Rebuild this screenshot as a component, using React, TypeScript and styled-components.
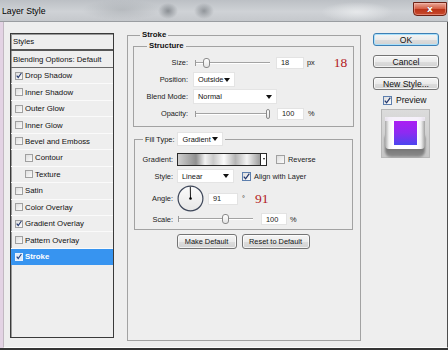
import React from 'react';
import styled, { createGlobalStyle, css } from 'styled-components';

const GlobalStyle = createGlobalStyle`
  html, body { margin: 0; padding: 0; }
  body { background: #2e2e2e; font-family: "Liberation Sans", Arial, sans-serif; color: #111; }
  * { box-sizing: border-box; }
`;

const Window = styled.div`
  width: 448px;
  height: 350px;
  display: flex;
  flex-direction: column;
  background: #e3d3e4;
  overflow: hidden;
`;

const TitleBar = styled.div`
  height: 22px;
  flex: none;
  display: flex;
  align-items: flex-start;
  justify-content: space-between;
  padding-left: 2px;
  border-bottom: 1px solid #9a9da1;
  background:
    radial-gradient(ellipse 10px 8px at 168px 11px, rgba(70, 76, 82, 0.5), rgba(70, 76, 82, 0)),
    radial-gradient(ellipse 10px 8px at 204px 11px, rgba(70, 76, 82, 0.45), rgba(70, 76, 82, 0)),
    radial-gradient(ellipse 36px 10px at 357px 12px, rgba(236, 238, 240, 0.8), rgba(236, 238, 240, 0)),
    radial-gradient(ellipse 40px 10px at 122px 10px, rgba(140, 145, 150, 0.35), rgba(140, 145, 150, 0)),
    linear-gradient(#bcc0c5, #cfd2d6 55%, #c5c8cc);
`;

const Title = styled.span`
  font-size: 8.7px;
  line-height: 11px;
  padding-top: 6px;
  color: #000;
`;

const CloseButton = styled.div`
  width: 34px;
  height: 14px;
  margin-top: 2px;
  margin-right: 1px;
  border: 1px solid #6e2417;
  border-radius: 0 0 4px 4px;
  background: linear-gradient(#e9a999, #d45a40 50%, #bb3419 51%, #c8492c);
  box-shadow: inset 0 0 0 1px rgba(255, 200, 190, 0.45);
  display: flex;
  align-items: center;
  justify-content: center;
  color: #fff;
  font-family: "DejaVu Sans", sans-serif;
  font-weight: bold;
  font-size: 9px;
  line-height: 1;
  text-shadow: 0 0 1px #5a1a10;
`;

const Body = styled.div`
  flex: 1;
  display: flex;
  align-items: flex-start;
  margin-left: 3px;
  padding: 8px 0 0 6px;
  background: #eeeeee;
  border-left: 1px solid #c2b8c2;
  border-right: 1px solid #4d4d4d;
  border-bottom: 1px solid #fdfdfd;
`;

const BottomEdge = styled.div`
  height: 2px;
  flex: none;
  background: #353535;
`;

/* ---------- styles list ---------- */

const StylesList = styled.div`
  width: 104px;
  height: 305px;
  margin-top: 3px;
  flex: none;
  display: flex;
  flex-direction: column;
  background: #eeeeee;
  border: 1px solid #3a3a3a;
  box-shadow: inset 1px 1px 0 #9a9a9a;
  font-size: 7.8px;
`;

const ListHeader = styled.div<{ $thick?: boolean }>`
  height: 17px;
  flex: none;
  display: flex;
  align-items: center;
  padding-left: 2px;
  border-bottom: ${(p) => (p.$thick ? '2px solid #555' : '1px solid #6a6a6a')};
`;

const ListItem = styled.div<{ $indent?: boolean; $selected?: boolean }>`
  height: 16.45px;
  flex: none;
  display: flex;
  align-items: center;
  gap: 2px;
  padding-left: ${(p) => (p.$indent ? 14 : 4)}px;
  border-bottom: 1px solid #fafafa;
  ${(p) =>
    p.$selected &&
    css`
      background: #3794f0;
      color: #fff;
      font-weight: bold;
      border-bottom-color: #3794f0;
    `}
`;

/* ---------- checkbox ---------- */

const CheckBox = styled.span<{ $size?: number; $accent?: boolean; $light?: boolean }>`
  width: ${(p) => p.$size ?? 8}px;
  height: ${(p) => p.$size ?? 8}px;
  flex: none;
  display: inline-flex;
  align-items: center;
  justify-content: center;
  border: 1px solid ${(p) => (p.$light ? '#e8f2ff' : p.$accent ? '#5d7fae' : '#a0a0a0')};
  background: ${(p) => (p.$light ? '#dfe9f7' : 'linear-gradient(135deg, #dedede, #fbfbfb)')};
`;

const Tick = ({ color = '#23386e' }: { color?: string }) => (
  <svg width="7" height="7" viewBox="0 0 7 7">
    <path d="M0.8 3.6 L2.6 5.8 L6.3 0.6" fill="none" stroke={color} strokeWidth="1.3" />
  </svg>
);

const Check = ({ checked, size, accent, light }: { checked?: boolean; size?: number; accent?: boolean; light?: boolean }) => (
  <CheckBox $size={size} $accent={accent} $light={light}>
    {checked && <Tick color={light ? '#1d3f86' : '#23386e'} />}
  </CheckBox>
);

/* ---------- fieldsets ---------- */

const StrokeGroup = styled.fieldset`
  width: 234px;
  height: 311px;
  margin: 0 0 0 13px;
  padding: 1px 6px 0 5px;
  flex: none;
  border: 1px solid #a2a2a2;
  min-width: 0;
`;

const Legend = styled.legend<{ $left: number }>`
  margin-left: ${(p) => p.$left}px;
  padding: 0 2px;
  font-size: 7.8px;
  line-height: 10px;
  font-weight: bold;
  color: #111;
`;

const FillLegend = styled.legend`
  margin-left: 8px;
  padding: 0 2px;
  display: flex;
  align-items: center;
  gap: 3px;
  font-size: 7.4px;
  height: 14px;
`;

const SubGroup = styled.fieldset<{ $pt: number; $pb: number; $mx?: number; $mt?: number }>`
  margin: ${(p) => p.$mt ?? 0}px ${(p) => p.$mx ?? 0}px 0;
  padding: ${(p) => p.$pt}px 0 ${(p) => p.$pb}px 0;
  border: 1px solid #a2a2a2;
  min-width: 0;
  display: flex;
  flex-direction: column;
`;

const Row = styled.div<{ $h: number; $mt?: number }>`
  height: ${(p) => p.$h}px;
  margin-top: ${(p) => p.$mt ?? 0}px;
  display: flex;
  align-items: center;
  font-size: 7.4px;
  color: #1a1a1a;
`;

const Label = styled.span<{ $w: number; $gap: number }>`
  width: ${(p) => p.$w}px;
  margin-right: ${(p) => p.$gap}px;
  text-align: right;
  flex: none;
`;

const Slider = styled.div<{ $w: number; $ml?: number; $mr?: number }>`
  width: ${(p) => p.$w}px;
  margin-left: ${(p) => p.$ml ?? 0}px;
  margin-right: ${(p) => p.$mr ?? 0}px;
  height: 12px;
  flex: none;
  display: flex;
  align-items: center;
  background:
    linear-gradient(#9a9a9a, #9a9a9a) no-repeat 0 3px / 1px 6px,
    linear-gradient(to bottom, transparent 5px, #a3a3a3 5px, #a3a3a3 6px, #ffffff 6px, #ffffff 7px, transparent 7px);
`;

const Knob = styled.span<{ $at: number }>`
  width: 7px;
  height: 10px;
  margin-left: ${(p) => p.$at}px;
  border: 1px solid #8a8a8a;
  border-radius: 3px;
  background: linear-gradient(#ffffff, #e4e4e4);
`;

const TextInput = styled.span<{ $w: number; $mr?: number }>`
  width: ${(p) => p.$w}px;
  height: 12px;
  margin-right: ${(p) => p.$mr ?? 0}px;
  flex: none;
  display: flex;
  align-items: center;
  padding-left: 4px;
  background: #fff;
  border: 1px solid #e3e3e3;
  font-size: 7.4px;
`;

const Unit = styled.span<{ $w?: number }>`
  width: ${(p) => (p.$w === undefined ? 'auto' : `${p.$w}px`)};
  font-size: 7.4px;
  flex: none;
`;

const RedNote = styled.span<{ $ml: number }>`
  margin-left: ${(p) => p.$ml}px;
  font-family: "Liberation Serif", "Times New Roman", serif;
  font-size: 13.5px;
  color: #b3181c;
  line-height: 1;
`;

const Select = styled.span<{ $w: number; $h?: number }>`
  width: ${(p) => p.$w}px;
  height: ${(p) => p.$h ?? 15}px;
  flex: none;
  display: flex;
  align-items: center;
  justify-content: space-between;
  padding: 0 4px;
  background: #fff;
  border: 1px solid #e4e4e4;
  font-size: 7.4px;
  font-weight: normal;
  color: #111;
`;

const Arrow = styled.span`
  width: 0;
  height: 0;
  border-left: 3px solid transparent;
  border-right: 3px solid transparent;
  border-top: 4px solid #111;
`;

const GradientBar = styled.span`
  width: 90px;
  height: 13px;
  flex: none;
  display: flex;
  border: 1px solid #2a2a2a;
  background: #fff;
`;

const GradientSwatch = styled.span`
  flex: 1;
  background: linear-gradient(
    to right,
    #cfcfcf 0%,
    #8f8f8f 22%,
    #f2f2f2 33%,
    #c9c9c9 43%,
    #fbfbfb 56%,
    #b4b4b4 70%,
    #f4f4f4 84%,
    #9c9c9c 100%
  );
`;

const GradientDrop = styled.span`
  width: 6px;
  flex: none;
  display: flex;
  align-items: center;
  justify-content: center;
  border-left: 1px solid #2a2a2a;
  &::after {
    content: '';
    border-left: 1.5px solid transparent;
    border-right: 1.5px solid transparent;
    border-top: 2px solid #111;
  }
`;

const Inline = styled.span<{ $ml: number }>`
  margin-left: ${(p) => p.$ml}px;
  display: flex;
  align-items: center;
  gap: 3px;
  flex: none;
`;

const ButtonRow = styled.div`
  margin-top: 4px;
  display: flex;
  justify-content: center;
  gap: 5px;
  padding-right: 1px;
`;

const PushButton = styled.div<{ $w: number; $h?: number; $default?: boolean; $fs?: number }>`
  width: ${(p) => p.$w}px;
  height: ${(p) => p.$h ?? 15}px;
  flex: none;
  display: flex;
  align-items: center;
  justify-content: center;
  border: 1px solid ${(p) => (p.$default ? '#3d7fb4' : '#747474')};
  border-radius: 3px;
  background: linear-gradient(#f5f5f5, #ebebeb 50%, #dddddd 51%, #d2d2d2);
  box-shadow: inset 0 0 0 1px ${(p) => (p.$default ? '#a9e0fb' : 'rgba(255,255,255,0.7)')};
  font-size: ${(p) => p.$fs ?? 7.4}px;
  color: #111;
`;

/* ---------- right column ---------- */

const RightColumn = styled.div`
  width: 66px;
  margin: 3px 0 0 12px;
  flex: none;
  display: flex;
  flex-direction: column;
  gap: 9px;
`;

const PreviewRow = styled.div`
  height: 10px;
  margin-top: -4px;
  padding-left: 10px;
  display: flex;
  align-items: center;
  gap: 4px;
  font-size: 8.6px;
`;

const SwatchFrame = styled.div`
  width: 49px;
  height: 49px;
  margin: -5px 0 0 8px;
`;

const Dial = () => (
  <svg width="27" height="27" viewBox="0 0 27 27" style={{ flex: 'none' }}>
    <defs>
      <linearGradient id="dialFill" x1="0" y1="0" x2="0" y2="1">
        <stop offset="0" stopColor="#fbfbfb" />
        <stop offset="1" stopColor="#e6e6e6" />
      </linearGradient>
    </defs>
    <circle cx="13.5" cy="13.5" r="12.4" fill="url(#dialFill)" stroke="#3d4659" strokeWidth="1.2" />
    <line x1="13.5" y1="13.5" x2="13.3" y2="1.8" stroke="#1b1b1b" strokeWidth="1" />
    <circle cx="13.5" cy="13.5" r="1.3" fill="#000" />
  </svg>
);

const Swatch = () => (
  <svg width="49" height="49" viewBox="0 0 49 49">
    <defs>
      <linearGradient id="swBg" x1="0" y1="0" x2="0" y2="1">
        <stop offset="0" stopColor="#dcdcdc" />
        <stop offset="1" stopColor="#c6c6c6" />
      </linearGradient>
      <linearGradient id="swFrame" x1="0" y1="0" x2="1" y2="0">
        <stop offset="0" stopColor="#a8a8a8" />
        <stop offset="0.1" stopColor="#f3f3f3" />
        <stop offset="0.2" stopColor="#ffffff" />
        <stop offset="0.8" stopColor="#ffffff" />
        <stop offset="0.9" stopColor="#f0f0f0" />
        <stop offset="1" stopColor="#a2a2a2" />
      </linearGradient>
      <linearGradient id="swFill" x1="0" y1="0" x2="0" y2="1">
        <stop offset="0" stopColor="#ab1df3" />
        <stop offset="0.5" stopColor="#8c2bf1" />
        <stop offset="1" stopColor="#4b46ee" />
      </linearGradient>
      <linearGradient id="swShadow" x1="0" y1="0" x2="0" y2="1">
        <stop offset="0" stopColor="#4e4e4e" />
        <stop offset="1" stopColor="#8c8c8c" />
      </linearGradient>
      <filter id="swBlur" x="-20%" y="-20%" width="140%" height="140%">
        <feGaussianBlur stdDeviation="0.8" />
      </filter>
    </defs>
    <rect x="0.5" y="0.5" width="48" height="48" fill="url(#swBg)" stroke="#b8b8b8" />
    <rect x="4" y="24" width="40" height="24" rx="6" fill="url(#swShadow)" filter="url(#swBlur)" />
    <rect x="4" y="8" width="40" height="32" rx="4" fill="url(#swFrame)" />
    <rect x="4" y="8" width="40" height="4" fill="#f4eefa" opacity="0.8" />
    <rect x="13" y="12" width="23" height="24" fill="url(#swFill)" />
  </svg>
);

const styleItems: { name: string; checked?: boolean; indent?: boolean; selected?: boolean }[] = [
  { name: 'Drop Shadow', checked: true },
  { name: 'Inner Shadow' },
  { name: 'Outer Glow' },
  { name: 'Inner Glow' },
  { name: 'Bevel and Emboss' },
  { name: 'Contour', indent: true },
  { name: 'Texture', indent: true },
  { name: 'Satin' },
  { name: 'Color Overlay' },
  { name: 'Gradient Overlay', checked: true },
  { name: 'Pattern Overlay' },
  { name: 'Stroke', checked: true, selected: true },
];

export default function App() {
  return (
    <>
      <GlobalStyle />
      <Window>
        <TitleBar>
          <Title>Layer Style</Title>
          <CloseButton>x</CloseButton>
        </TitleBar>
        <Body>
          <StylesList>
            <ListHeader $thick>Styles</ListHeader>
            <ListHeader>Blending Options: Default</ListHeader>
            {styleItems.map((it) => (
              <ListItem key={it.name} $indent={it.indent} $selected={it.selected}>
                <Check checked={it.checked} light={it.selected} />
                {it.name}
              </ListItem>
            ))}
          </StylesList>

          <StrokeGroup>
            <Legend $left={7}>Stroke</Legend>
            <SubGroup $pt={3} $pb={4}>
              <Legend $left={13}>Structure</Legend>
              <Row $h={17}>
                <Label $w={54} $gap={5}>Size:</Label>
                <Slider $w={75} $ml={2} $mr={6}>
                  <Knob $at={8} />
                </Slider>
                <TextInput $w={28} $mr={3}>18</TextInput>
                <Unit>px</Unit>
                <RedNote $ml={19}>18</RedNote>
              </Row>
              <Row $h={17}>
                <Label $w={54} $gap={5}>Position:</Label>
                <Select $w={42}>
                  Outside
                  <Arrow />
                </Select>
              </Row>
              <Row $h={17}>
                <Label $w={54} $gap={5}>Blend Mode:</Label>
                <Select $w={84}>
                  Normal
                  <Arrow />
                </Select>
              </Row>
              <Row $h={17}>
                <Label $w={54} $gap={5}>Opacity:</Label>
                <Slider $w={75} $ml={2} $mr={7}>
                  <Knob $at={71} />
                </Slider>
                <TextInput $w={27} $mr={4}>100</TextInput>
                <Unit>%</Unit>
              </Row>
            </SubGroup>

            <SubGroup $pt={6} $pb={3} $mx={1} $mt={5}>
              <FillLegend>
                Fill Type:
                <Select $w={46} $h={14}>
                  Gradient
                  <Arrow />
                </Select>
              </FillLegend>
              <Row $h={14}>
                <Label $w={38} $gap={4}>Gradient:</Label>
                <GradientBar>
                  <GradientSwatch />
                  <GradientDrop />
                </GradientBar>
                <Inline $ml={9}>
                  <Check size={9} />
                  Reverse
                </Inline>
              </Row>
              <Row $h={14} $mt={3}>
                <Label $w={38} $gap={4}>Style:</Label>
                <Select $w={57} $h={14}>
                  Linear
                  <Arrow />
                </Select>
                <Inline $ml={8}>
                  <Check size={9} checked accent />
                  Align with Layer
                </Inline>
              </Row>
              <Row $h={27} $mt={2}>
                <Label $w={38} $gap={4}>Angle:</Label>
                <Dial />
                <Inline $ml={4}>
                  <TextInput $w={30}>91</TextInput>
                </Inline>
                <Unit $w={0}>
                  <Inline $ml={4}>°</Inline>
                </Unit>
                <RedNote $ml={17}>91</RedNote>
              </Row>
              <Row $h={14}>
                <Label $w={38} $gap={5}>Scale:</Label>
                <Slider $w={75} $mr={8}>
                  <Knob $at={44} />
                </Slider>
                <TextInput $w={26} $mr={3}>100</TextInput>
                <Unit>%</Unit>
              </Row>
            </SubGroup>

            <ButtonRow>
              <PushButton $w={60}>Make Default</PushButton>
              <PushButton $w={68}>Reset to Default</PushButton>
            </ButtonRow>
          </StrokeGroup>

          <RightColumn>
            <PushButton $w={66} $h={13} $default $fs={8.6}>OK</PushButton>
            <PushButton $w={66} $h={13} $fs={8.6}>Cancel</PushButton>
            <PushButton $w={66} $h={13} $fs={8.6}>New Style...</PushButton>
            <PreviewRow>
              <Check size={9} checked accent />
              Preview
            </PreviewRow>
            <SwatchFrame>
              <Swatch />
            </SwatchFrame>
          </RightColumn>
        </Body>
        <BottomEdge />
      </Window>
    </>
  );
}
